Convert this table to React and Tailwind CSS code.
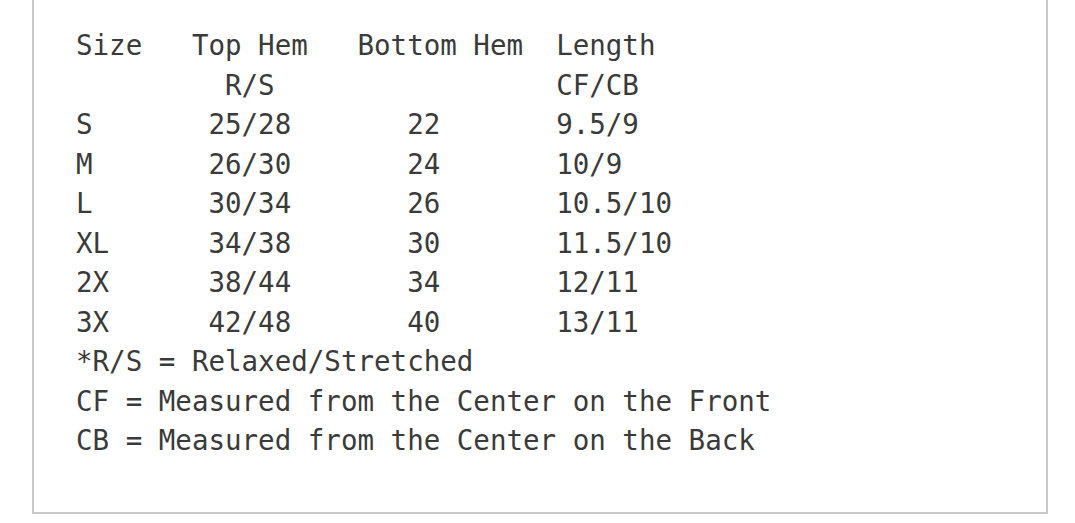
const rows = [
  "Size   Top Hem   Bottom Hem  Length",
  "         R/S                 CF/CB",
  "S       25/28       22       9.5/9",
  "M       26/30       24       10/9",
  "L       30/34       26       10.5/10",
  "XL      34/38       30       11.5/10",
  "2X      38/44       34       12/11",
  "3X      42/48       40       13/11",
  "*R/S = Relaxed/Stretched",
  "CF = Measured from the Center on the Front",
  "CB = Measured from the Center on the Back",
];

const App = () => {
  return (
    <div className="bg-white min-h-screen">
      {/* size chart box */}
      <div className="ml-[32px] w-[1016px] h-[514px] border-x-2 border-b-2 border-[#c9c9c9] pt-[26px] pl-[42px]">
        <pre className="font-['DejaVu_Sans_Mono',monospace] text-[27.5px] leading-[39.5px] text-[#3a3a3a]">
          {rows.join("\n")}
        </pre>
      </div>
    </div>
  );
};

export default App;
